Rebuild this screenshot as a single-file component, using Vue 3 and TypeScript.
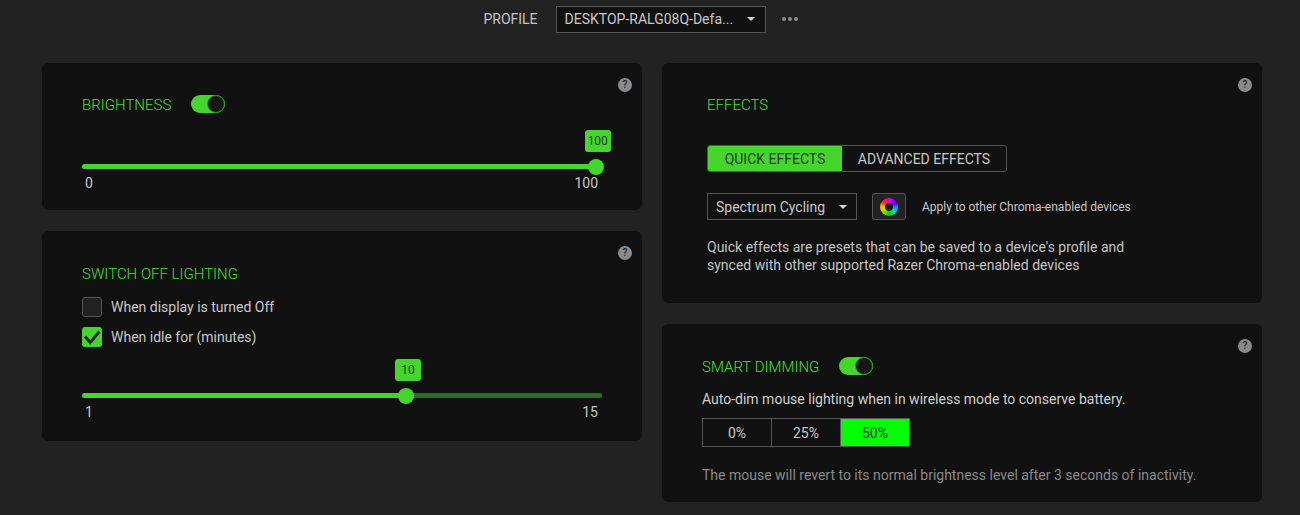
<script setup lang="ts">
const levels = [
  { label: '0%', on: false },
  { label: '25%', on: false },
  { label: '50%', on: true },
]
</script>

<template>
  <div class="page">
    <header class="top">
      <span class="profile-label">PROFILE</span>
      <div class="select profile-select">
        <span class="ellipsis">DESKTOP-RALG08Q-Defa...</span>
        <i class="caret"></i>
      </div>
      <div class="dots"><i></i><i></i><i></i></div>
    </header>

    <main class="columns">
      <div class="col">
        <section class="panel brightness">
          <span class="help">?</span>
          <div class="title-row">
            <h2>BRIGHTNESS</h2>
            <div class="toggle"><i></i></div>
          </div>
          <div class="slider s-bright">
            <div class="track">
              <div class="fill" :style="{ width: '98.8%' }"></div>
              <div class="thumb" :style="{ left: '98.8%' }">
                <span class="bubble">100</span>
              </div>
            </div>
            <div class="ends"><span>0</span><span>100</span></div>
          </div>
        </section>

        <section class="panel switchoff">
          <span class="help">?</span>
          <h2>SWITCH OFF LIGHTING</h2>
          <label class="check first"><span class="box"></span>When display is turned Off</label>
          <label class="check"><span class="box on">
            <svg width="20" height="20" viewBox="0 0 20 20"><path d="M3 9.5 8.2 15.5 17.5 4.5" fill="none" stroke="#222" stroke-width="3"/></svg>
          </span>When idle for (minutes)</label>
          <div class="slider s-idle">
            <div class="track">
              <div class="fill" :style="{ width: '62.3%' }"></div>
              <div class="thumb" :style="{ left: '62.3%' }">
                <span class="bubble">10</span>
              </div>
            </div>
            <div class="ends"><span>1</span><span>15</span></div>
          </div>
        </section>
      </div>

      <div class="col">
        <section class="panel effects">
          <span class="help">?</span>
          <h2>EFFECTS</h2>
          <div class="tabs">
            <span class="tab active">QUICK EFFECTS</span>
            <span class="tab">ADVANCED EFFECTS</span>
          </div>
          <div class="effect-row">
            <div class="select effect-select">
              <span>Spectrum Cycling</span>
              <i class="caret"></i>
            </div>
            <div class="wheel-btn"><i class="wheel"></i></div>
            <span class="apply">Apply to other Chroma-enabled devices</span>
          </div>
          <p class="desc">Quick effects are presets that can be saved to a device's profile and<br />synced with other supported Razer Chroma-enabled devices</p>
        </section>

        <section class="panel dimming">
          <span class="help">?</span>
          <div class="title-row">
            <h2>SMART DIMMING</h2>
            <div class="toggle"><i></i></div>
          </div>
          <p class="auto">Auto-dim mouse lighting when in wireless mode to conserve battery.</p>
          <div class="levels">
            <span v-for="l in levels" :key="l.label" class="level" :class="{ on: l.on }">{{ l.label }}</span>
          </div>
          <p class="hint">The mouse will revert to its normal brightness level after 3 seconds of inactivity.</p>
        </section>
      </div>
    </main>
  </div>
</template>

<style>
html, body { margin: 0; background: #222222; }
</style>

<style scoped>
* { box-sizing: border-box; }
.page {
  width: 1300px;
  height: 515px;
  overflow: hidden;
  background: #222222;
  font-family: Roboto, "Liberation Sans", sans-serif;
  font-size: 14px;
  color: #c8c8c8;
}
.top {
  display: flex;
  align-items: center;
  justify-content: center;
  padding: 6px 19px 0 0;
  height: 33px;
}
.profile-label { margin: 0 18px 2px 0; color: #c4c4c4; }
.select {
  display: flex;
  align-items: center;
  justify-content: space-between;
  height: 27px;
  background: #111;
  border: 1px solid #555;
}
.profile-select { width: 210px; padding: 0 10px 2px 8px; }
.ellipsis { white-space: nowrap; }
.caret {
  width: 0;
  height: 0;
  border-left: 4px solid transparent;
  border-right: 4px solid transparent;
  border-top: 4px solid #d8d8d8;
}
.dots { display: flex; gap: 2px; margin: 0 0 2px 16px; }
.dots i { width: 4px; height: 4px; border-radius: 50%; background: #8c8c8c; }

.columns {
  display: grid;
  grid-template-columns: 600px 600px;
  gap: 20px;
  padding: 30px 0 0 42px;
}
.col { display: flex; flex-direction: column; gap: 21px; }
.panel {
  position: relative;
  background: #111;
  border-radius: 6px;
}
.help {
  position: absolute;
  top: 15px;
  right: 10px;
  width: 14px;
  height: 14px;
  border-radius: 50%;
  background: #8a8a8a;
  color: #222;
  font-size: 10px;
  font-weight: 500;
  line-height: 14px;
  text-align: center;
}
h2 {
  margin: 0 0 -1px;
  padding-top: 1px;
  font-family: Roboto, "Noto Sans", sans-serif;
  font-size: 15px;
  font-weight: 300;
  line-height: 20px;
  color: #48e02e;
}
.title-row { display: flex; align-items: center; gap: 20px; }
.toggle {
  position: relative;
  width: 34px;
  height: 18px;
  border-radius: 9px;
  background: #44d62c;
}
.toggle i {
  position: absolute;
  top: 0;
  right: 0;
  width: 18px;
  height: 18px;
  border-radius: 50%;
  background: #171717;
  border: 1px solid #2f9a20;
}

.brightness { height: 147px; padding: 31px 40px 0; }
.slider { width: 520px; }
.s-bright { margin-top: 50px; }
.track {
  position: relative;
  height: 5px;
  border-radius: 3px;
  background: #2b6e20;
}
.fill { height: 100%; border-radius: 3px; background: #44d62c; }
.thumb {
  position: absolute;
  top: 50%;
  width: 16px;
  height: 16px;
  margin: -8px 0 0 -8px;
  border-radius: 50%;
  background: #44d62c;
}
.bubble {
  position: absolute;
  left: 50%;
  bottom: 23px;
  width: 26px;
  height: 22px;
  margin-left: -11px;
  border-radius: 3px;
  background: #44d62c;
  color: #1c3a17;
  font-size: 12px;
  line-height: 22px;
  text-align: center;
}
.ends {
  display: flex;
  justify-content: space-between;
  padding: 0 4px 0 3px;
  margin-top: 6px;
  line-height: 16px;
  color: #c8c8c8;
}

.switchoff { height: 210px; padding: 32px 40px 0; }
.check {
  display: flex;
  align-items: center;
  gap: 9px;
  height: 20px;
  margin-top: 10px;
}
.check.first { margin-top: 14px; }
.box {
  width: 20px;
  height: 20px;
  border-radius: 3px;
  background: #222;
  border: 1px solid #555;
}
.box.on { background: #44d62c; border: 0; }
.box svg { display: block; }
.s-idle { margin-top: 46px; }

.effects { height: 240px; padding: 31px 45px 0; }
.tabs {
  display: flex;
  width: 300px;
  height: 27px;
  margin-top: 31px;
  border: 1px solid #555;
  border-radius: 3px;
  overflow: hidden;
}
.tab {
  flex: 1;
  display: flex;
  align-items: center;
  justify-content: center;
  color: #c8c8c8;
}
.tab.active {
  flex: 0 0 134px;
  background: #44d62c;
  color: #1c3a17;
}
.effect-row { display: flex; align-items: center; margin-top: 21px; }
.effect-select { width: 150px; padding: 0 9px 0 8px; }
.wheel-btn {
  display: flex;
  align-items: center;
  justify-content: center;
  width: 34px;
  height: 27px;
  margin-left: 15px;
  border: 1px solid #555;
  border-radius: 3px;
  background: #222;
}
.wheel {
  width: 18px;
  height: 18px;
  border-radius: 50%;
  background:
    radial-gradient(circle, #1a1a1a 0 3.5px, transparent 4.5px),
    conic-gradient(#e000e0, #6000ff 60deg, #0090ff 90deg, #00e0c0 130deg, #00d000 180deg, #a0e000 230deg, #ffc000 270deg, #ff3000 310deg, #e000e0);
}
.apply { margin-left: 16px; font-size: 12px; color: #c8c8c8; }
.desc { margin: 18px 0 0; line-height: 18px; color: #c4c4c4; }

.dimming { height: 178px; padding: 32px 40px 0; }
.auto { margin: 14px 0 0; line-height: 18px; color: #cfcfcf; }
.levels {
  display: flex;
  width: 208px;
  height: 29px;
  margin-top: 10px;
  border: 1px solid #555;
}
.level {
  flex: 1;
  display: flex;
  align-items: center;
  justify-content: center;
  border-left: 1px solid #555;
}
.level:first-child { border-left: 0; }
.level.on { background: #00ff00; color: #1c3a17; }
.hint { margin: 19px 0 0; line-height: 18px; color: #8a8a8a; }
</style>
